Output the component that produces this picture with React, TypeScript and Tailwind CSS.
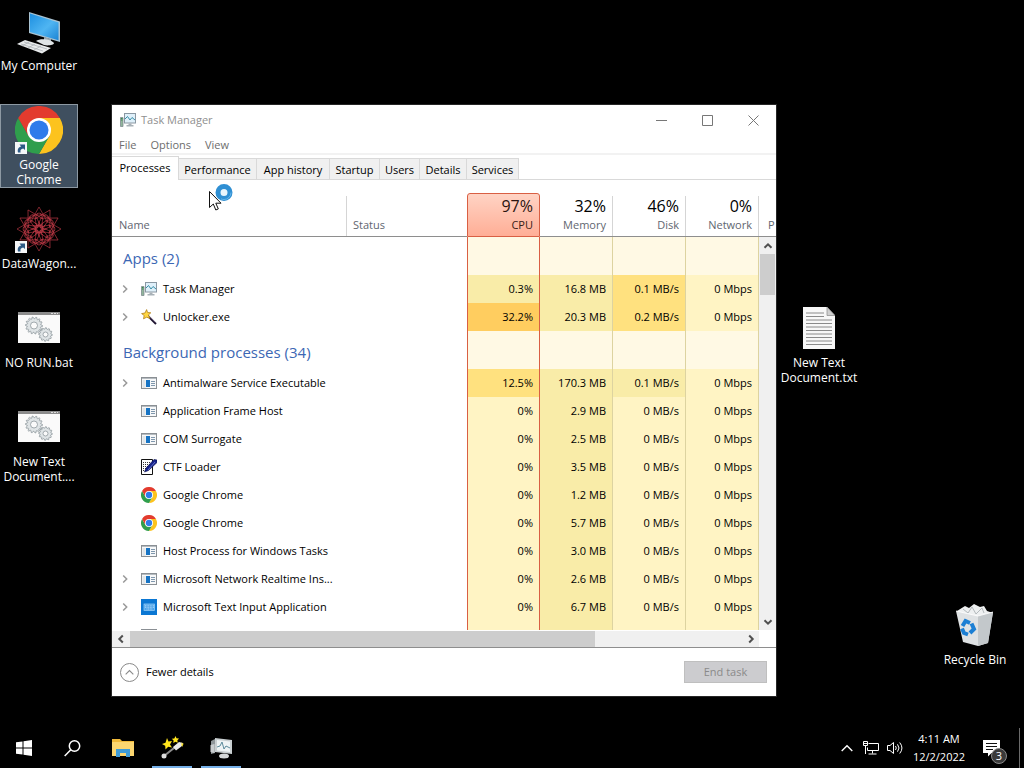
import type { ReactNode } from "react";
import clsx from "clsx";

type Heat = "none" | "low" | "mid" | "high" | "max";
type IconName = "taskmgr" | "wand" | "exe" | "pen" | "chrome" | "keyboard";

type Process = {
  name: string;
  icon: IconName;
  expandable?: boolean;
  values: [string, string, string, string];
  heat: [Heat, Heat, Heat, Heat];
};

const heatClass: Record<Heat, string> = {
  none: "bg-[#fff9e4]",
  low: "bg-[#fff4c4]",
  mid: "bg-[#f9eca8]",
  high: "bg-[#ffe17f]",
  max: "bg-[#ffcd5f]",
};

const apps: Process[] = [
  { name: "Task Manager", icon: "taskmgr", expandable: true, values: ["0.3%", "16.8 MB", "0.1 MB/s", "0 Mbps"], heat: ["mid", "mid", "high", "low"] },
  { name: "Unlocker.exe", icon: "wand", expandable: true, values: ["32.2%", "20.3 MB", "0.2 MB/s", "0 Mbps"], heat: ["max", "mid", "high", "low"] },
];

const background: Process[] = [
  { name: "Antimalware Service Executable", icon: "exe", expandable: true, values: ["12.5%", "170.3 MB", "0.1 MB/s", "0 Mbps"], heat: ["high", "mid", "mid", "low"] },
  { name: "Application Frame Host", icon: "exe", values: ["0%", "2.9 MB", "0 MB/s", "0 Mbps"], heat: ["low", "mid", "low", "low"] },
  { name: "COM Surrogate", icon: "exe", values: ["0%", "2.5 MB", "0 MB/s", "0 Mbps"], heat: ["low", "mid", "low", "low"] },
  { name: "CTF Loader", icon: "pen", values: ["0%", "3.5 MB", "0 MB/s", "0 Mbps"], heat: ["low", "mid", "low", "low"] },
  { name: "Google Chrome", icon: "chrome", values: ["0%", "1.2 MB", "0 MB/s", "0 Mbps"], heat: ["low", "mid", "low", "low"] },
  { name: "Google Chrome", icon: "chrome", values: ["0%", "5.7 MB", "0 MB/s", "0 Mbps"], heat: ["low", "mid", "low", "low"] },
  { name: "Host Process for Windows Tasks", icon: "exe", values: ["0%", "3.0 MB", "0 MB/s", "0 Mbps"], heat: ["low", "mid", "low", "low"] },
  { name: "Microsoft Network Realtime Ins...", icon: "exe", expandable: true, values: ["0%", "2.6 MB", "0 MB/s", "0 Mbps"], heat: ["low", "mid", "low", "low"] },
  { name: "Microsoft Text Input Application", icon: "keyboard", expandable: true, values: ["0%", "6.7 MB", "0 MB/s", "0 Mbps"], heat: ["low", "mid", "low", "low"] },
  { name: "", icon: "exe", values: ["", "", "", ""], heat: ["low", "mid", "low", "low"] },
];

const tabs = [
  { label: "Performance", width: "w-[78px]" },
  { label: "App history", width: "w-[73px]" },
  { label: "Startup", width: "w-[50px]" },
  { label: "Users", width: "w-[40px]" },
  { label: "Details", width: "w-[47px]" },
  { label: "Services", width: "w-[52px]" },
];

const columns = [
  { total: "97%", label: "CPU" },
  { total: "32%", label: "Memory" },
  { total: "46%", label: "Disk" },
  { total: "0%", label: "Network" },
];

/* ---------- icons ---------- */

const Chevron = ({ d, className }: { d: string; className: string }) => (
  <svg viewBox="0 0 10 10" className={className} fill="none" stroke="currentColor">
    <path d={d} />
  </svg>
);

const UP = "M1.5 6.8 5 3.3l3.5 3.5";
const DOWN = "M1.5 3.2 5 6.7l3.5-3.5";
const LEFT = "M6.8 1.5 3.3 5l3.5 3.5";
const RIGHT = "M3.2 1.5 6.7 5 3.2 8.5";

const ChromeIcon = ({ className }: { className: string }) => (
  <svg viewBox="0 0 48 48" className={className}>
    <path d="M24 12h20.8A24 24 0 0 1 24 48l10.4-18Z" fill="#fcc31e" />
    <path d="M13.6 30 3.2 12A24 24 0 0 0 24 48l10.4-18Z" fill="#2f9e4c" />
    <path d="M24 12h20.8A24 24 0 0 0 3.2 12l10.4 18Z" fill="#e33b2e" />
    <circle cx="24" cy="24" r="12" fill="#fff" />
    <circle cx="24" cy="24" r="9.5" fill="#2f7bea" />
  </svg>
);

const TaskManagerIcon = () => (
  <svg viewBox="0 0 16 16" className="h-4 w-4">
    <path d="M0.5 5.5h2.5v9H0.5Z" fill="#8fb59a" stroke="#7f8c91" strokeWidth=".8" />
    <path d="M1 6.5h1.5M1 8h1.5" stroke="#3c8a4c" />
    <rect x="4.5" y="1.5" width="11" height="9.5" fill="#dff0fa" stroke="#8a98a3" />
    <path d="M5 7 7.500 4.500l2.500 3.500L12 5.500l3 2.500" fill="none" stroke="#3a8fa8" />
    <path d="M8.5 11.5h3v1.500h2v1.500h-7V13h2Z" fill="#a8b1b7" />
  </svg>
);

const ExeIcon = () => (
  <svg viewBox="0 0 16 16" className="h-4 w-4">
    <rect x=".5" y="2.5" width="15" height="11" fill="#f7f8f9" stroke="#8a8f94" />
    <path d="M1 3.5h14" stroke="#b5bbc0" />
    <rect x="1.5" y="5" width="3" height="8" fill="#e1e5e8" />
    <rect x="5" y="5" width="4" height="7" fill="#1673c4" />
    <path d="M10 6.5h4M10 8.5h4M10 10.5h4" stroke="#7f97ad" />
  </svg>
);

const WandIcon = () => (
  <svg viewBox="0 0 16 16" className="h-4 w-4">
    <path d="m6.5 6.5 8.5 8.5" stroke="#1e1530" strokeWidth="2" />
    <path d="m7.5 6.5 7 7" stroke="#8b7a9c" strokeWidth=".6" />
    <path d="m5.600.600 1 2.900 3.200.300L7.400 5.900l1.500 3.500-3.200-1.200-3.200 1.600.700-3.300L.600 4.600l3.400-.600Z" fill="#ffd640" stroke="#b1801c" strokeWidth=".8" />
  </svg>
);

const PenIcon = () => (
  <svg viewBox="0 0 16 16" className="h-4 w-4">
    <path d="M.5.5h11v15H.5Z" fill="#fff" stroke="#111" />
    <path d="M2 3.500h8M2 5.500h7M2 7.500h5M2 9.500h4M2 11.500h3" stroke="#333" strokeDasharray="1 1" />
    <path d="m3.500 13 1.500-4 8-8.500 3 .5v2.500l-8.500 8Z" fill="#16218c" stroke="#080d4a" strokeWidth=".6" />
    <path d="m7 11 7-8" stroke="#7f92e0" strokeWidth=".7" />
  </svg>
);

const KeyboardIcon = () => (
  <svg viewBox="0 0 16 16" className="h-4 w-4">
    <path d="M0 0h16v16H0Z" fill="#0b77d3" />
    <rect x="3" y="5" width="10.500" height="6.500" fill="#4ba3ea" stroke="#9fd2fa" strokeWidth=".7" />
    <path d="M4 6.800h9M4 8.300h9M5.500 10h6" stroke="#d5ecff" strokeWidth=".7" strokeDasharray="1 .6" />
  </svg>
);

const processIcons: Record<IconName, ReactNode> = {
  taskmgr: <TaskManagerIcon />,
  wand: <WandIcon />,
  exe: <ExeIcon />,
  pen: <PenIcon />,
  chrome: <ChromeIcon className="h-4 w-4" />,
  keyboard: <KeyboardIcon />,
};

const ShortcutBadge = () => (
  <svg viewBox="0 0 12 12" className="absolute bottom-0 left-0 h-3 w-3">
    <path d="M0 0h12v12H0Z" fill="#f4f6f8" />
    <path d="M3 10.500C2.200 7.500 3.500 5 6.200 4.600L4.500 2.500H10V8L8.200 6.500C6 6.800 5 8 5.600 10.500Z" fill="#2d5a86" />
  </svg>
);

const ComputerIcon = () => (
  <svg viewBox="0 0 48 48" className="h-12 w-12">
    <defs>
      <linearGradient id="screen" x1="0" y1="0" x2="1" y2="1">
        <stop offset="0" stopColor="#1d8fe0" />
        <stop offset=".55" stopColor="#4fb5f2" />
        <stop offset="1" stopColor="#1c84d4" />
      </linearGradient>
    </defs>
    <path d="m14 5 31 9.500v20.500L14 26Z" fill="#a9c3d2" />
    <path d="m15 6.500 28.500 9v17.700L15 25Z" fill="url(#screen)" />
    <path d="m29 30 7 2v4l-7-2Z" fill="#9aa7ae" />
    <path d="M21 34c4-3 15-2 18 2 0 2-6 3-10 2Z" fill="#dfe4e6" />
    <path d="m2 37 8-4 26 8-9 5.500Z" fill="#e8ebec" />
    <path d="m6 37 22 7M9 35l23 7M14 35l-7 4M20 37l-7 4M26 39l-7 4" stroke="#a7aeb2" strokeWidth=".7" />
  </svg>
);

const RosetteIcon = () => (
  <svg viewBox="0 0 48 48" className="h-12 w-12" fill="none" stroke="#c43a48" strokeWidth=".6">
    {Array.from({ length: 12 }, (_, i) => (
      <g key={i} transform={`rotate(${i * 30} 24 24)`}>
        <path d="M24 2 33 18M24 2 15 18" />
        <ellipse cx="24" cy="15" rx="3.500" ry="7" />
        <path d="M17 10h14M20 18l8 4" />
      </g>
    ))}
  </svg>
);

const gear = (cx: number, cy: number, r: number, teeth: number) =>
  Array.from({ length: teeth * 4 }, (_, i) => {
    const a = (i / (teeth * 4)) * Math.PI * 2;
    const rad = i % 4 < 2 ? r : r * 0.8;
    return `${i ? "L" : "M"}${(cx + rad * Math.cos(a)).toFixed(1)} ${(cy + rad * Math.sin(a)).toFixed(1)}`;
  }).join("") + "Z";

const BatchIcon = () => (
  <svg viewBox="0 0 42 32" className="h-8 w-[42px]">
    <path d="M0 0h42v31H0Z" fill="#fafafa" />
    <path d="M0 0h42v3H0Z" fill="#8c8c8c" />
    <path d="M33 1.500h7" stroke="#ddd" strokeDasharray="2 1" />
    <g fill="#dfe4e6" stroke="#8d979c" strokeWidth=".8">
      <path d={gear(16, 13.5, 8.5, 14)} />
      <path d={gear(27.5, 22.5, 6.8, 12)} />
      <circle cx="16" cy="13.500" r="3.500" fill="#fafafa" />
      <circle cx="27.500" cy="22.500" r="2.500" fill="#fafafa" />
    </g>
  </svg>
);

const TextFileIcon = () => (
  <svg viewBox="0 0 32 42" className="h-[42px] w-8">
    <path d="M0 0h24l8 8.500V42H0Z" fill="#f7f7f7" />
    <path d="M24 0v8.500h8Z" fill="#cfcfcf" stroke="#888" strokeWidth=".7" />
    <path d="M3 6h18M3 9.500h18M3 13h26M3 16.500h26M3 20h26M3 23.500h26M3 27h26M3 30.500h26M3 34h26M3 37.500h26" stroke="#8a8a8a" />
  </svg>
);

const RecycleBinIcon = () => (
  <svg viewBox="0 0 48 48" className="h-12 w-12">
    <path d="m6 10 8-5 4 2 5-4 6 3 4-1 3 5 6 2-14 5-20-3Z" fill="#eef0f1" />
    <path d="m12 8 5 4 4-6 4 7 6-6 2 5" fill="none" stroke="#b4babd" />
    <path d="m5 10 22 5 15-4-5 31-10 3-15-4Z" fill="#dfe2e4" />
    <path d="m27 15 15-4-5 31-10 3Z" fill="#c3c8cb" />
    <path d="m5 10 22 5 15-4" fill="none" stroke="#fff" strokeWidth=".8" />
    <g fill="none" stroke="#1c7fd4" strokeWidth="4">
      <path d="m11.500 25 3-5 4.500 2" />
      <path d="m20.500 22.500 2.500 5.500-4 4" />
      <path d="m17 33.500-4-1.500-2-4.500" />
    </g>
  </svg>
);

const TaskbarTaskManagerIcon = () => (
  <svg viewBox="0 0 24 24" className="h-6 w-6">
    <path d="m2 5 4-2v14l-4 1Z" fill="#8f9699" />
    <path d="m1.500 9 4-1v9l-4-1Z" fill="#c9cdcf" />
    <path d="m6 2 17 2v14L6 16Z" fill="#c9cfd1" />
    <path d="m8 4 13 1.500v10.500L8 14.500Z" fill="#eff4f5" />
    <path d="m8 11 3-1 2-4 2 7 2-3 4 2" fill="none" stroke="#5c8b9b" />
    <ellipse cx="15" cy="20" rx="5" ry="2.500" fill="#d5d8d9" />
  </svg>
);

const TaskbarWandIcon = () => (
  <svg viewBox="0 0 24 24" className="h-6 w-6">
    <path d="M4 20 19 8" stroke="#8d8d8d" strokeWidth="2" />
    <path d="m13 11 6-5 4 1-1 3-6 4.500Z" fill="#e9e9e9" />
    <circle cx="4" cy="20" r="2.500" fill="#dedede" />
    <path d="m7 2 1.500 3.500L12 5 10 8.500l2 3-3.800-.8L5.500 13.500 5.200 9.800 2 8l3.500-1.300Z" fill="#ffe41c" />
    <path d="m15.500 0 1 2.300 2.500.200-1.700 1.900.500 2.400-2.300-1-2.200 1.200.300-2.500-1.800-1.700 2.500-.400Z" fill="#ffe41c" />
    <path d="m21.500 6 .700 1.500 1.800.300-1.300 1.200.200 1.700-1.400-.900Z" fill="#ffe41c" />
  </svg>
);

const FolderIcon = () => (
  <svg viewBox="0 0 22 18" className="h-[18px] w-[22px]">
    <path d="M0 0h8l2 2h12v15H0Z" fill="#f0b93a" />
    <path d="M0 3h22v14H0Z" fill="#fcd670" />
    <path d="M4 18v-8h14v8h-4v-4H8v4Z" fill="#3f9bd6" />
  </svg>
);

/* ---------- desktop ---------- */

type DesktopIconProps = { label: string[]; cell?: string; selected?: boolean; shortcut?: boolean; children: ReactNode };

const DesktopIcon = ({ label, cell, selected, shortcut, children }: DesktopIconProps) => (
  <button
    type="button"
    className={clsx(
      "flex h-[84px] flex-col items-center border text-[12px] leading-[15px] text-white",
      selected ? "border-[#8d99a3] bg-[#3f4f5f]" : "border-transparent",
      cell
    )}
  >
    <span className="relative mt-px flex h-12 w-12 shrink-0 items-center justify-center">
      {children}
      {shortcut && <ShortcutBadge />}
    </span>
    <span className="mt-[3px] whitespace-nowrap">
      {label.map((line) => (
        <span key={line} className="block">{line}</span>
      ))}
    </span>
  </button>
);

const Cursor = () => (
  <div className="pointer-events-none absolute left-[209px] top-[182px]">
    <svg viewBox="0 0 26 30" className="h-[30px] w-[26px]">
      <circle cx="15" cy="10.500" r="6" fill="#e9f5fc" stroke="#2f8fd3" strokeWidth="5" />
      <circle cx="15" cy="10.500" r="7" fill="none" stroke="#62b5ea" strokeDasharray="14 30" />
      <path d="M.5 9.500v16l3.800-3.500 2.500 6 2.500-1.100-2.500-5.700h5.200Z" fill="#fff" stroke="#111" />
    </svg>
  </div>
);

/* ---------- task manager ---------- */

const valueBorder = (i: number) => (i === 0 ? "border-x border-[#d95f43]" : "border-r border-[#ddd3a0]");

const ProcessRow = ({ process }: { process: Process }) => (
  <tr className="h-7">
    <td className="p-0">
      <div className="grid grid-cols-[21px_22px_1fr] items-center pl-2">
        {process.expandable ? (
          <button type="button" aria-label={`Expand ${process.name}`} className="text-[#999]">
            <Chevron d={RIGHT} className="h-[10px] w-[10px] stroke-[1.5]" />
          </button>
        ) : (
          <span />
        )}
        {processIcons[process.icon]}
        <span className="whitespace-nowrap">{process.name}</span>
      </div>
    </td>
    <td />
    {process.values.map((value, i) => (
      <td key={i} className={clsx("p-0 pr-[6px] text-right", valueBorder(i), heatClass[process.heat[i]])}>
        {value}
      </td>
    ))}
    <td />
  </tr>
);

const GroupRow = ({ title }: { title: string }) => (
  <tr className="h-[38px]">
    <th colSpan={2} scope="rowgroup" className="p-0 pl-[11px] pt-1 text-left text-[15px] font-normal text-[#3c67b4]">
      {title}
    </th>
    {columns.map((c, i) => (
      <td key={c.label} className={clsx(heatClass.none, valueBorder(i))} />
    ))}
    <td />
  </tr>
);

const ProcessTable = () => (
  <table className="w-full table-fixed border-separate border-spacing-0">
    <colgroup>
      <col />
      <col className="w-[120px]" />
      <col className="w-[73px]" />
      <col className="w-[73px]" />
      <col className="w-[73px]" />
      <col className="w-[73px]" />
      <col className="w-[17px]" />
    </colgroup>
    <thead className="text-[#5f6670]">
      <tr className="h-11">
        <th scope="col" className="border-b border-[#8e8e8e] p-0 font-normal">
          <div className="mt-[3px] flex h-10 items-end border-r border-[#d5d5d5] pb-[3px] pl-[7px]">Name</div>
        </th>
        <th scope="col" className="border-b border-[#8e8e8e] p-0 font-normal">
          <div className="mt-[3px] flex h-10 items-end pb-[3px] pl-[6px]">Status</div>
        </th>
        {columns.map((c, i) => (
          <th
            key={c.label}
            scope="col"
            className={clsx(
              "p-0 text-right font-normal",
              i === 0
                ? "rounded-t-[3px] border border-[#d95f43] bg-linear-to-b from-[#ffd3c4] to-[#ffae96] text-[#3a1c16]"
                : "border-b border-[#8e8e8e]"
            )}
          >
            <div className={clsx("flex flex-col justify-end pb-[2px] pr-[6px]", i === 0 ? "h-[42px]" : "mt-[3px] h-10 border-r border-[#d5d5d5]")}>
              <span className={clsx("text-[16px] leading-5", i === 0 ? "text-[#2b1410]" : "text-black")}>{c.total}</span>
              <span className="leading-[18px]">{c.label}</span>
            </div>
          </th>
        ))}
        <th scope="col" className="overflow-hidden border-b border-[#8e8e8e] p-0 font-normal">
          <div className="mt-[3px] flex h-10 items-end pb-[3px] pl-[9px]">P</div>
        </th>
      </tr>
    </thead>
    <tbody>
      <GroupRow title="Apps (2)" />
      {apps.map((p) => (
        <ProcessRow key={p.name} process={p} />
      ))}
    </tbody>
    <tbody>
      <GroupRow title="Background processes (34)" />
      {background.map((p, i) => (
        <ProcessRow key={i} process={p} />
      ))}
    </tbody>
  </table>
);

const TaskManager = () => (
  <section aria-label="Task Manager" className="absolute bottom-[72px] left-[112px] right-[248px] top-[105px] flex flex-col bg-white outline outline-[#262626]">
    <header className="flex h-[30px] shrink-0 items-center pl-2 text-[#8f8f8f]">
      <TaskManagerIcon />
      <h1 className="ml-[5px] flex-1">Task Manager</h1>
      <div className="flex text-[#777]">
        <button type="button" aria-label="Minimize" className="flex w-[46px] justify-center">
          <svg viewBox="0 0 11 11" className="h-[11px] w-[11px]"><path d="M0 5.500h11" stroke="currentColor" /></svg>
        </button>
        <button type="button" aria-label="Maximize" className="flex w-[46px] justify-center">
          <svg viewBox="0 0 11 11" className="h-[11px] w-[11px]"><path d="M.5.5h10v10H.5Z" fill="none" stroke="currentColor" /></svg>
        </button>
        <button type="button" aria-label="Close" className="flex w-[46px] justify-center">
          <svg viewBox="0 0 11 11" className="h-[11px] w-[11px]"><path d="m.5.5 10 10M10.500.5l-10 10" stroke="currentColor" /></svg>
        </button>
      </div>
    </header>

    <nav className="flex h-5 shrink-0 items-center gap-[14px] border-b-2 border-[#f2f2f2] pl-[7px] pt-[2px] text-[#6d6d6d]">
      <button type="button">File</button>
      <button type="button">Options</button>
      <button type="button">View</button>
    </nav>

    <div role="tablist" className="flex h-[25px] shrink-0 items-end border-b border-[#d9d9d9]">
      <button type="button" role="tab" aria-selected="true" className="-mb-px h-6 w-[67px] border-r border-t border-[#d9d9d9] bg-white pb-[2px]">
        Processes
      </button>
      {tabs.map((tab) => (
        <button
          key={tab.label}
          type="button"
          role="tab"
          aria-selected="false"
          className={clsx("h-[21px] whitespace-nowrap border-r border-t border-[#d9d9d9] bg-[#f0f0f0] pt-[2px]", tab.width)}
        >
          {tab.label}
        </button>
      ))}
    </div>

    <div className="mt-[13px] grid min-h-0 flex-1 grid-cols-[1fr_17px] grid-rows-[44px_1fr] overflow-hidden">
      <div className="col-span-2 col-start-1 row-span-2 row-start-1 min-h-0 overflow-hidden">
        <ProcessTable />
      </div>
      <div className="z-10 col-start-2 row-start-2 flex flex-col items-center justify-between bg-[#f0f0f0] text-[#505050]">
        <div className="flex w-full flex-col items-center">
          <button type="button" aria-label="Scroll up" className="flex h-[17px] items-center">
            <Chevron d={UP} className="h-[10px] w-[10px] stroke-2" />
          </button>
          <div className="h-[41px] w-[15px] bg-[#cdcdcd]" />
        </div>
        <button type="button" aria-label="Scroll down" className="flex h-[17px] items-center">
          <Chevron d={DOWN} className="h-[10px] w-[10px] stroke-2" />
        </button>
      </div>
    </div>

    <div className="flex h-[18px] shrink-0 border-b border-[#8e8e8e] pr-[17px] pt-px text-[#505050]">
      <div className="flex flex-1 bg-[#f0f0f0]">
        <button type="button" aria-label="Scroll left" className="flex w-[18px] items-center justify-center">
          <Chevron d={LEFT} className="h-[10px] w-[10px] stroke-2" />
        </button>
        <div className="flex-1">
          <div className="h-full w-[76%] bg-[#cdcdcd]" />
        </div>
        <button type="button" aria-label="Scroll right" className="flex w-[17px] items-center justify-center">
          <Chevron d={RIGHT} className="h-[10px] w-[10px] stroke-2" />
        </button>
      </div>
    </div>

    <footer className="flex h-12 shrink-0 items-center justify-between pl-2 pr-[9px]">
      <button type="button" className="flex items-center gap-[7px]">
        <span className="flex h-[19px] w-[19px] items-center justify-center rounded-full border border-[#8a8a8a] text-[#8a8a8a]">
          <Chevron d={UP} className="h-[11px] w-[11px] stroke-1" />
        </span>
        Fewer details
      </button>
      <button type="button" disabled className="h-[22px] w-[83px] border border-[#bfbfbf] bg-[#cccccf] text-[#8a8a8a]">
        End task
      </button>
    </footer>
  </section>
);

const TaskbarButton = ({ label, active, children }: { label: string; active?: boolean; children: ReactNode }) => (
  <button type="button" aria-label={label} className="flex w-12 flex-col items-center">
    <span className="flex flex-1 items-center">{children}</span>
    {active && <span className="-mt-[2px] h-[2px] w-10 bg-[#76b0e8]" />}
  </button>
);

const Taskbar = () => (
  <footer className="flex h-10 items-stretch justify-between text-white">
    <div className="flex">
      <TaskbarButton label="Start">
        <svg viewBox="0 0 16 16" className="h-4 w-4" fill="#fff">
          <path d="M0 2.300 6.500 1.400V7.500H0ZM7.500 1.200 16 0V7.500H7.500ZM0 8.500h6.500v6.100L0 13.700ZM7.500 8.500H16V16l-8.500-1.200Z" />
        </svg>
      </TaskbarButton>
      <TaskbarButton label="Search">
        <svg viewBox="0 0 17 17" className="h-[17px] w-[17px]" fill="none" stroke="#fff" strokeWidth="1.500">
          <circle cx="10.500" cy="6" r="5.200" />
          <path d="M6.800 9.800.7 16" />
        </svg>
      </TaskbarButton>
      <div className="ml-[3px] flex gap-px">
        <TaskbarButton label="File Explorer"><FolderIcon /></TaskbarButton>
        <TaskbarButton label="Unlocker" active><TaskbarWandIcon /></TaskbarButton>
        <TaskbarButton label="Task Manager" active><TaskbarTaskManagerIcon /></TaskbarButton>
      </div>
    </div>

    <div className="flex items-center">
      <button type="button" aria-label="Show hidden icons" className="flex w-6 justify-center">
        <svg viewBox="0 0 12 8" className="h-2 w-3"><path d="m.7 7 5.300-5.300L11.300 7" fill="none" stroke="#fff" strokeWidth="1.400" /></svg>
      </button>
      <button type="button" aria-label="Network" className="flex w-6 justify-center">
        <svg viewBox="0 0 16 14" className="h-[14px] w-4" fill="none" stroke="#fff">
          <path d="M5.500 2.500h10v7h-11v-3M9.500 9.500v3M5.500 13h8" />
          <path d="M.5.500h4v4h-4ZM2.500 4.500V13M1 2.500h3" />
        </svg>
      </button>
      <button type="button" aria-label="Volume" className="flex w-6 justify-center">
        <svg viewBox="0 0 16 14" className="h-[14px] w-4" fill="none" stroke="#fff">
          <path d="M.5 4.500H3l3.500-3v11L3 9.500H.5Z" />
          <path d="M8.500 5q1.500 2 0 4M10.500 3.300q3 3.700 0 7.400M12.700 1.500q4.500 5.500 0 11" />
        </svg>
      </button>
      <div className="w-16 text-center leading-[18px]">
        <div>4:11 AM</div>
        <div>12/2/2022</div>
      </div>
      <button type="button" aria-label="3 new notifications" className="relative ml-2 h-6 w-9">
        <svg viewBox="0 0 17 17" className="absolute left-1 top-1 h-[17px] w-[17px]">
          <path d="M0 0h17v13H8.500L5 16.500V13H0Z" fill="#fff" />
          <path d="M3 3.500h11M3 6.500h11M3 9.500h7" stroke="#111" />
        </svg>
        <span className="absolute left-3 top-3 flex h-4 w-4 items-center justify-center rounded-full border border-[#8a8a8a] bg-[#3a3a3a]">3</span>
      </button>
      <div className="mx-1 h-full w-px bg-[#6a6a6a]" />
    </div>
  </footer>
);

export default function App() {
  return (
    <div className="relative flex h-screen flex-col overflow-hidden bg-black font-['Open_Sans','Noto_Sans',sans-serif] text-[11px] leading-4 text-black">
      <main className="grid min-h-0 flex-1 auto-cols-[78px] auto-rows-[99px] items-start pt-[5px]">
        <DesktopIcon label={["My Computer"]} cell="col-start-1 row-start-1"><ComputerIcon /></DesktopIcon>
        <DesktopIcon label={["Google", "Chrome"]} cell="col-start-1 row-start-2" selected shortcut><ChromeIcon className="h-12 w-12" /></DesktopIcon>
        <DesktopIcon label={["DataWagon..."]} cell="col-start-1 row-start-3" shortcut><RosetteIcon /></DesktopIcon>
        <DesktopIcon label={["NO RUN.bat"]} cell="col-start-1 row-start-4"><BatchIcon /></DesktopIcon>
        <DesktopIcon label={["New Text", "Document...."]} cell="col-start-1 row-start-5"><BatchIcon /></DesktopIcon>
        <DesktopIcon label={["New Text", "Document.txt"]} cell="col-start-11 row-start-4"><TextFileIcon /></DesktopIcon>
        <DesktopIcon label={["Recycle Bin"]} cell="col-start-13 row-start-7"><RecycleBinIcon /></DesktopIcon>
      </main>
      <TaskManager />
      <Taskbar />
      <Cursor />
    </div>
  );
}
